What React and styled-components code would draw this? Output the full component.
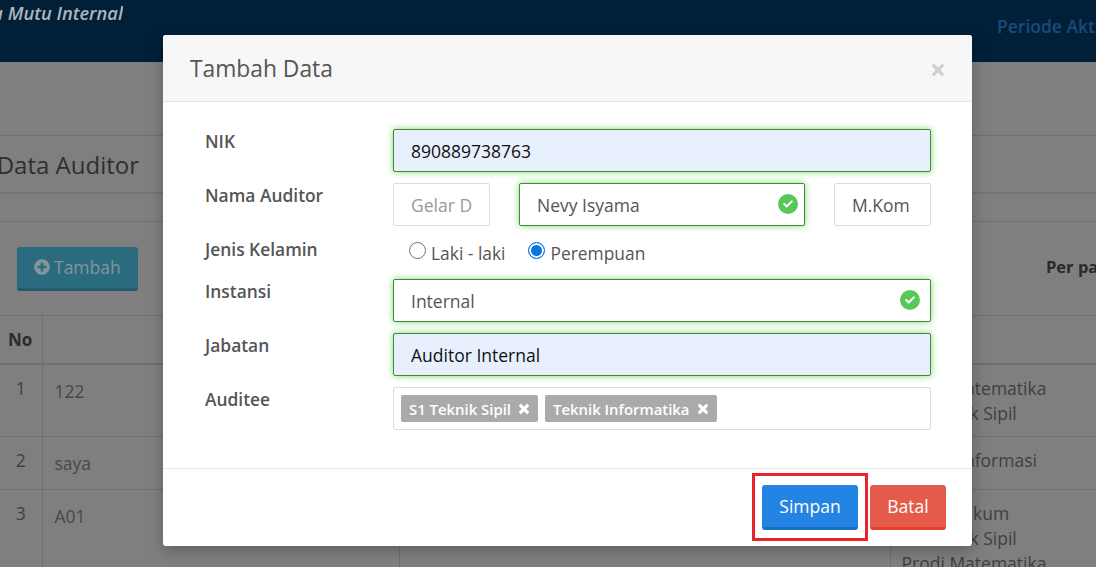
import React from "react";
import styled, { createGlobalStyle } from "styled-components";
import { FaCheck, FaPlusCircle, FaTimes } from "react-icons/fa";

const LINE = "#6f6f6f";
const FONT = `"Open Sans", "Liberation Sans", sans-serif`;

const Global = createGlobalStyle`
  html, body {
    margin: 0;
    background: #7f7f7f;
  }
  * {
    box-sizing: border-box;
  }
`;

const Page = styled.div`
  position: relative;
  width: 1096px;
  height: 567px;
  overflow: hidden;
  background: #7f7f7f;
  font-family: ${FONT};
  color: #3f3f3f;
`;

const TopBar = styled.header`
  display: flex;
  justify-content: space-between;
  height: 62px;
  background: #012038;
`;

const Brand = styled.div`
  display: flex;
  justify-content: flex-end;
  width: 123px;
  height: 26px;
  overflow: hidden;
  white-space: nowrap;
  font-size: 18.3px;
  font-style: italic;
  font-weight: 600;
  line-height: 26px;
  color: #aeb5bc;
`;

const Period = styled.div`
  width: 99px;
  padding-top: 14px;
  overflow: hidden;
  white-space: nowrap;
  font-size: 17.5px;
  font-weight: 600;
  line-height: 24px;
  color: #1b4a7c;
`;

const TitleBand = styled.div`
  display: flex;
  justify-content: flex-end;
  width: 100%;
  height: 59px;
  margin-top: 73px;
  border-top: 1px solid ${LINE};
  border-bottom: 2px solid #747474;
`;

const TitleClip = styled.div`
  display: flex;
  justify-content: flex-end;
  width: 139px;
  margin-right: auto;
  overflow: hidden;
`;

const PageTitle = styled.h1`
  margin: 0;
  white-space: nowrap;
  font-size: 24px;
  font-weight: 400;
  line-height: 58px;
  color: #2f2f2f;
`;

const Toolbar = styled.div`
  display: flex;
  align-items: center;
  justify-content: space-between;
  height: 94px;
  margin-top: 27px;
  padding: 0 0 0 17px;
  border-top: 1px solid ${LINE};
`;

const AddButton = styled.div`
  display: flex;
  align-items: center;
  gap: 4px;
  width: 121px;
  height: 44px;
  padding-left: 17px;
  background: #2b6b80;
  border-bottom: 3px solid #235a6c;
  border-radius: 3px;
  font-size: 17.5px;
  color: #84959c;
`;

const PerPage = styled.div`
  width: 50px;
  margin-bottom: 5px;
  white-space: nowrap;
  overflow: hidden;
  font-size: 16.5px;
  font-weight: 700;
  color: #2a2a2a;
`;

const Table = styled.table`
  width: 1096px;
  table-layout: fixed;
  border-collapse: collapse;
  font-size: 17.5px;
  line-height: 25px;
`;

const HeadCell = styled.th`
  height: 48px;
  padding: 0 8px;
  border: 1px solid ${LINE};
  border-bottom-width: 2px;
  border-left: 0;
  text-align: left;
  font-size: 17px;
  font-weight: 700;
  color: #2c2c2c;
`;

const Row = styled.tr`
  height: ${(p) => p.$height}px;
`;

const Cell = styled.td`
  padding: 11px 0 0 ${(p) => p.$indent || 12}px;
  border: 1px solid ${LINE};
  border-left: 0;
  vertical-align: top;
  color: ${(p) => (p.$dim ? "#484848" : "#3f3f3f")};
`;

const NumberCell = styled(Cell)`
  padding-left: 0;
  text-align: center;
`;

const CodeCell = styled(Cell)`
  padding-top: 14px;
`;

const Modal = styled.div`
  position: absolute;
  top: 35px;
  left: 163px;
  width: 809px;
  height: 511px;
  background: #fff;
  border-radius: 3px;
  box-shadow: 0 5px 15px rgba(0, 0, 0, 0.25);
  overflow: hidden;
`;

const ModalHeader = styled.div`
  display: flex;
  align-items: center;
  justify-content: space-between;
  height: 67px;
  padding: 0 28px 0 27px;
  background: #f7f7f7;
  border-bottom: 1px solid #e5e5e5;
`;

const ModalTitle = styled.h2`
  margin: 0;
  font-size: 22.8px;
  font-weight: 400;
  color: #555;
`;

const CloseIcon = styled(FaTimes)`
  width: 12px;
  height: 18px;
  margin-top: 3px;
  color: #cfcfcf;
`;

const ModalBody = styled.form`
  display: flex;
  flex-direction: column;
  gap: 11px;
  padding: 27px 41px 38px 42px;
  border-bottom: 1px solid #e5e5e5;
`;

const FormRow = styled.div`
  display: flex;
  margin-bottom: ${(p) => (p.$tight ? "-11px" : "0")};
`;

const Label = styled.label`
  flex: 0 0 188px;
  font-size: 17.4px;
  font-weight: 600;
  line-height: 24px;
  color: #555;
`;

const Fields = styled.div`
  display: flex;
  justify-content: space-between;
  flex: 1;
  min-height: 43px;
`;

const InputWrap = styled.div`
  position: relative;
  flex: ${(p) => (p.$width ? `0 0 ${p.$width}px` : "1")};
`;

const Input = styled.input`
  display: block;
  width: 100%;
  height: 43px;
  padding: 0 17px;
  border: 1px solid ${(p) => (p.$valid ? "#3f8a3f" : "#dcdcdc")};
  border-radius: 2px;
  outline: 0;
  background: ${(p) => (p.$filled ? "#e8f0fe" : "#fff")};
  box-shadow: ${(p) => (p.$valid ? "0 0 7px #7ddc66" : "none")};
  font-family: ${FONT};
  font-size: 17.5px;
  color: ${(p) => (p.$filled ? "#111" : "#555")};

  &::placeholder {
    color: #999;
    opacity: 1;
  }
`;

const ValidBadge = styled.span`
  position: absolute;
  top: 11px;
  right: ${(p) => p.$right}px;
  display: flex;
  align-items: center;
  justify-content: center;
  width: 20px;
  height: 20px;
  border-radius: 50%;
  background: #58c858;
  color: #fff;
  font-size: 10px;
`;

const RadioGroup = styled.div`
  display: flex;
  align-items: flex-start;
  gap: 23px;
  height: 42px;
  padding: 4px 0 0 16px;
`;

const RadioOption = styled.span`
  display: flex;
  gap: 5px;
  font-size: 17.4px;
  line-height: 24px;
  color: #555;
`;

const RadioDot = styled.span`
  flex: none;
  width: 17px;
  height: 17px;
  margin-top: 1px;
  border-radius: 50%;
  border: ${(p) => (p.$on ? "1.5px solid #0a76e0" : "1.5px solid #707070")};
  background: ${(p) => (p.$on ? "#0a76e0" : "#fff")};
  box-shadow: ${(p) => (p.$on ? "inset 0 0 0 2px #fff" : "none")};
`;

const TagBox = styled.div`
  display: flex;
  align-items: center;
  gap: 7px;
  flex: 1;
  height: 43px;
  padding: 0 7px;
  border: 1px solid #dcdcdc;
  border-radius: 2px;
`;

const Tag = styled.span`
  display: flex;
  align-items: center;
  gap: 8px;
  height: 27px;
  padding: 0 9px 0 8px;
  background: #aaa;
  border-radius: 2px;
  font-size: 14.9px;
  font-weight: 600;
  color: #fff;
`;

const TagClose = styled(FaTimes)`
  width: 10px;
  height: 14px;
  stroke: currentColor;
  stroke-width: 30;
`;

const ModalFooter = styled.div`
  position: relative;
  display: flex;
  justify-content: flex-end;
  gap: 12px;
  padding: 16px 26px;
`;

const Button = styled.button`
  width: ${(p) => p.$width}px;
  height: 45px;
  padding: 0;
  border: 0;
  border-bottom: 3px solid ${(p) => p.$edge};
  border-radius: 3px;
  background: ${(p) => p.$color};
  font-family: ${FONT};
  font-size: 17.5px;
  color: #fff;
`;

const Highlight = styled.span`
  position: absolute;
  top: 4px;
  left: 589px;
  width: 116px;
  height: 68px;
  border: 3px solid #e8232a;
`;

const rows = [
  { no: 1, code: "122", height: 73, units: ["Prodi Matematika", "S1 Teknik Sipil"] },
  { no: 2, code: "saya", height: 53, units: ["Teknik Informasi"] },
  { no: 3, code: "A01", height: 90, units: ["Prodi Hukum", "S1 Teknik Sipil", "Prodi Matematika"] },
];

const App = () => (
  <Page>
    <Global />
    <TopBar>
      <Brand>Penjamina Mutu Internal</Brand>
      <Period>Periode Aktif</Period>
    </TopBar>
    <TitleBand>
      <TitleClip>
        <PageTitle>Data Auditor</PageTitle>
      </TitleClip>
    </TitleBand>
    <Toolbar>
      <AddButton>
        <FaPlusCircle size={16} />
        Tambah
      </AddButton>
      <PerPage>Per page</PerPage>
    </Toolbar>
    <Table>
      <colgroup>
        <col width="42" />
        <col width="357" />
        <col width="491" />
        <col width="206" />
      </colgroup>
      <thead>
        <tr>
          <HeadCell>No</HeadCell>
          <HeadCell />
          <HeadCell />
          <HeadCell />
        </tr>
      </thead>
      <tbody>
        {rows.map((row) => (
          <Row key={row.no} $height={row.height}>
            <NumberCell>{row.no}</NumberCell>
            <CodeCell $dim>{row.code}</CodeCell>
            <Cell />
            <Cell $indent={11}>
              {row.units.map((unit) => (
                <div key={unit}>{unit}</div>
              ))}
            </Cell>
          </Row>
        ))}
      </tbody>
    </Table>

    <Modal>
      <ModalHeader>
        <ModalTitle>Tambah Data</ModalTitle>
        <CloseIcon />
      </ModalHeader>
      <ModalBody>
        <FormRow>
          <Label>NIK</Label>
          <Fields>
            <InputWrap>
              <Input $valid $filled readOnly value="890889738763" />
            </InputWrap>
          </Fields>
        </FormRow>
        <FormRow>
          <Label>Nama Auditor</Label>
          <Fields>
            <InputWrap $width={97}>
              <Input readOnly placeholder="Gelar D" />
            </InputWrap>
            <InputWrap $width={286}>
              <Input $valid readOnly value="Nevy Isyama" />
              <ValidBadge $right={7}>
                <FaCheck />
              </ValidBadge>
            </InputWrap>
            <InputWrap $width={97}>
              <Input readOnly value="M.Kom" />
            </InputWrap>
          </Fields>
        </FormRow>
        <FormRow $tight>
          <Label>Jenis Kelamin</Label>
          <RadioGroup>
            <RadioOption>
              <RadioDot />
              Laki - laki
            </RadioOption>
            <RadioOption>
              <RadioDot $on />
              Perempuan
            </RadioOption>
          </RadioGroup>
        </FormRow>
        <FormRow>
          <Label>Instansi</Label>
          <Fields>
            <InputWrap>
              <Input $valid readOnly value="Internal" />
              <ValidBadge $right={11}>
                <FaCheck />
              </ValidBadge>
            </InputWrap>
          </Fields>
        </FormRow>
        <FormRow>
          <Label>Jabatan</Label>
          <Fields>
            <InputWrap>
              <Input $valid $filled readOnly value="Auditor Internal" />
            </InputWrap>
          </Fields>
        </FormRow>
        <FormRow>
          <Label>Auditee</Label>
          <TagBox>
            <Tag>
              S1 Teknik Sipil
              <TagClose />
            </Tag>
            <Tag>
              Teknik Informatika
              <TagClose />
            </Tag>
          </TagBox>
        </FormRow>
      </ModalBody>
      <ModalFooter>
        <Highlight />
        <Button type="button" $width={96} $color="#2384e4" $edge="#1a70c8">
          Simpan
        </Button>
        <Button type="button" $width={76} $color="#e55b4b" $edge="#e8402a">
          Batal
        </Button>
      </ModalFooter>
    </Modal>
  </Page>
);

export default App;
